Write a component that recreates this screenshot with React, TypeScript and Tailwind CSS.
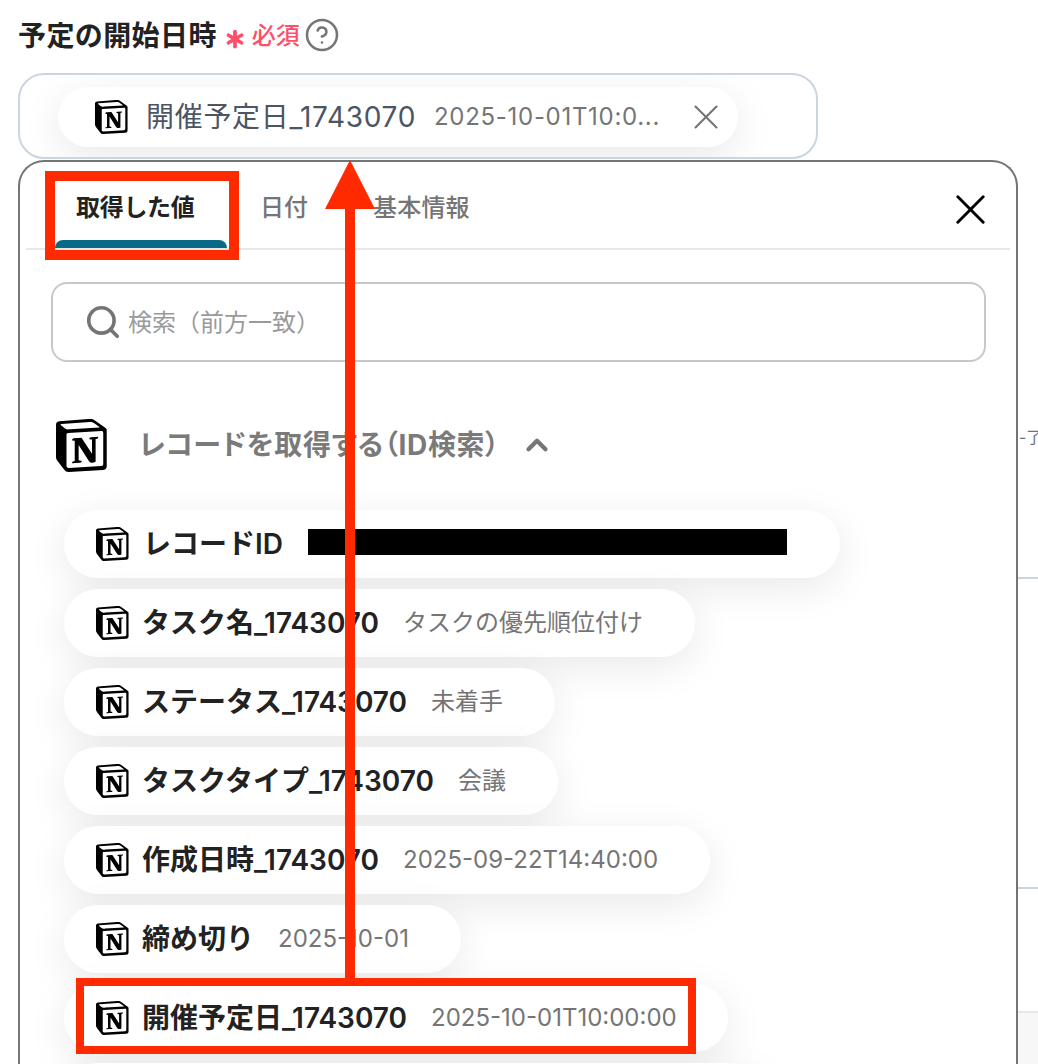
import React from "react";
import { ChevronUp, CircleHelp, Search, Asterisk } from "lucide-react";

const FONT = 'Inter, "Noto Sans CJK JP", "Noto Sans", sans-serif';

function NotionLogo({ className }: { className: string }) {
  return (
    <svg className={className} viewBox="0 0 100 100" fill="none" xmlns="http://www.w3.org/2000/svg">
      <path
        d="M6.017 4.313l55.333 -4.087c6.797 -0.583 8.543 -0.19 12.817 2.917l17.663 12.443c2.913 2.14 3.883 2.723 3.883 5.053v68.243c0 4.277 -1.553 6.807 -6.99 7.193L24.467 99.967c-4.08 0.193 -6.023 -0.39 -8.16 -3.113L3.3 79.94c-2.333 -3.113 -3.3 -5.443 -3.3 -8.167V11.113c0 -3.497 1.553 -6.413 6.017 -6.8z"
        fill="#fff"
      />
      <path
        fillRule="evenodd"
        clipRule="evenodd"
        fill="#000"
        d="M61.35 0.227l-55.333 4.087C1.553 4.7 0 7.617 0 11.113v60.66c0 2.723 0.967 5.053 3.3 8.167l13.007 16.913c2.137 2.723 4.08 3.307 8.16 3.113l64.257 -3.89c5.433 -0.387 6.99 -2.917 6.99 -7.193V20.64c0 -2.21 -0.873 -2.847 -3.443 -4.733L74.167 3.143c-4.273 -3.107 -6.02 -3.5 -12.817 -2.917zM25.92 19.523c-5.247 0.353 -6.437 0.433 -9.417 -1.99L8.927 11.507c-0.77 -0.78 -0.383 -1.753 1.557 -1.947l53.193 -3.887c4.467 -0.39 6.793 1.167 8.54 2.527l9.123 6.61c0.39 0.197 1.36 1.36 0.193 1.36l-54.933 3.307 -0.68 0.047zM19.803 88.3V30.367c0 -2.53 0.777 -3.697 3.103 -3.893L86 22.78c2.14 -0.193 3.107 1.167 3.107 3.693v57.547c0 2.53 -0.39 4.67 -3.883 4.863l-60.377 3.5c-3.493 0.193 -5.043 -0.97 -5.043 -4.083zm59.6 -54.827c0.387 1.75 0 3.5 -1.75 3.7l-2.91 0.577v42.773c-2.527 1.36 -4.853 2.137 -6.797 2.137 -3.107 0 -3.883 -0.973 -6.21 -3.887l-19.03 -29.94v28.967l6.02 1.363s0 3.5 -4.857 3.5l-13.39 0.777c-0.39 -0.78 0 -2.723 1.357 -3.11l3.497 -0.97v-38.3L30.48 40.667c-0.39 -1.75 0.58 -4.277 3.3 -4.473l14.367 -0.967 19.8 30.327v-26.83l-5.047 -0.58c-0.39 -2.143 1.163 -3.7 3.103 -3.89l13.4 -0.78z"
      />
    </svg>
  );
}

function CrossIcon({ className, width }: { className: string; width: number }) {
  return (
    <svg className={className} viewBox="0 0 32 32" fill="none" stroke="currentColor" strokeWidth={width} strokeLinecap="round">
      <line x1="2" y1="2" x2="30" y2="30" />
      <line x1="30" y1="2" x2="2" y2="30" />
    </svg>
  );
}

type Row = { name: string; value?: string; width: string; gap: string; redacted?: boolean; pad?: string };

const rows: Row[] = [
  { name: "レコードID", width: "w-[776px]", gap: "ml-[25px]", redacted: true, pad: "ml-[13px]" },
  { name: "タスク名_1743070", value: "タスクの優先順位付け", width: "w-[631px]", gap: "ml-[24px]" },
  { name: "ステータス_1743070", value: "未着手", width: "w-[491px]", gap: "ml-[24px]" },
  { name: "タスクタイプ_1743070", value: "会議", width: "w-[494px]", gap: "ml-[24px]" },
  { name: "作成日時_1743070", value: "2025-09-22T14:40:00", width: "w-[646px]", gap: "ml-[24px]" },
  { name: "締め切り", value: "2025-10-01", width: "w-[397px]", gap: "ml-[24px]" },
  { name: "開催予定日_1743070", value: "2025-10-01T10:00:00", width: "w-[664px]", gap: "ml-[24px]" },
];

function ValuePill({ row }: { row: Row }) {
  return (
    <div
      className={`${row.width} h-[68px] shrink-0 flex items-center pl-[32px] rounded-[34px] bg-white shadow-[0_10px_40px_rgba(0,0,0,0.09)] whitespace-nowrap`}
    >
      <NotionLogo className="w-[34px] h-[34px] shrink-0" />
      <span className={`${row.pad ?? "ml-[12px]"} text-[28px] leading-[34px] font-semibold text-[#222222]`}>{row.name}</span>
      {row.redacted ? (
        <span className="ml-[25px] mb-[4px] w-[479px] h-[26px] bg-black" />
      ) : (
        <span className={`${row.gap} text-[24px] leading-[30px] text-[#757575]`}>{row.value}</span>
      )}
    </div>
  );
}

export default function App() {
  return (
    <div className="relative w-[1038px] h-[1064px] overflow-hidden bg-white flex" style={{ fontFamily: FONT }}>
      <div className="w-[1018px] shrink-0 pl-[18px] flex flex-col">
        <div className="h-[73px] shrink-0 flex items-center whitespace-nowrap pb-[1px]">
          <span className="text-[28px] leading-[34px] font-semibold tracking-[0.4px] text-[#222222]">予定の開始日時</span>
          <Asterisk className="ml-[3px] mt-[5px] w-[30px] h-[30px] text-[#ff4d6a]" strokeWidth={3} />
          <span className="ml-[2px] text-[24px] leading-[30px] font-medium text-[#ff4d6a]">必須</span>
          <CircleHelp className="ml-[4px] mb-[2px] w-[36px] h-[36px] text-[#757575]" strokeWidth={1.7} />
        </div>

        <div className="w-[800px] h-[86px] shrink-0 flex items-center pl-[38px] pt-[2px] rounded-[26px] border-2 border-[#cbd5e1] overflow-hidden bg-white whitespace-nowrap">
          <div className="w-[680px] h-[60px] shrink-0 flex items-center pl-[37px] rounded-[30px] bg-white shadow-[0_10px_40px_rgba(0,0,0,0.09)]">
            <NotionLogo className="w-[34px] h-[34px] shrink-0" />
            <span className="ml-[17px] text-[28px] leading-[34px] tracking-[0.7px] text-[#4b5563]">開催予定日_1743070</span>
            <span className="ml-[18px] text-[24px] leading-[30px] tracking-[0.7px] text-[#757575]">2025-10-01T10:0...</span>
            <CrossIcon className="ml-[34px] w-[24px] h-[24px] text-[#757575]" width={2.8} />
          </div>
        </div>

        <div className="mt-[1px] w-[1000px] h-[904px] shrink-0 rounded-t-[26px] border-2 border-b-0 border-[#757575] bg-white flex flex-col">
          <div className="ml-[6px] w-[984px] h-[88px] shrink-0 flex items-end border-b-2 border-[#e5e7eb]">
            <div className="ml-[29px] w-[172px] h-full flex flex-col justify-end">
              <span className="pl-[21px] pb-[17px] text-[24px] leading-[30px] font-bold tracking-[-0.3px] text-[#222222]">取得した値</span>
              <div className="h-[8px] rounded-t-[8px] bg-[#0a6a85]" />
            </div>
            <span className="ml-[33px] pb-[25px] text-[24px] leading-[30px] font-medium text-[#757575]">日付</span>
            <span className="ml-[65px] pb-[25px] text-[24px] leading-[30px] font-medium tracking-[0.2px] text-[#757575]">基本情報</span>
            <CrossIcon className="ml-auto mr-[25px] mb-[24px] w-[29px] h-[29px] text-black" width={3.2} />
          </div>

          <div className="ml-[31px] mt-[32px] w-[935px] h-[80px] shrink-0 rounded-[16px] border-2 border-[#c8c8c8] flex items-center pl-[31px]">
            <Search className="w-[38px] h-[38px] text-[#757575]" strokeWidth={2.3} />
            <span className="ml-[6px] pt-[2px] text-[24px] leading-[30px] text-[#9a9a9a]">検索（前方一致）</span>
          </div>

          <div className="ml-[36px] mt-[56px] h-[54px] shrink-0 flex items-center whitespace-nowrap">
            <NotionLogo className="w-[53px] h-[53px] shrink-0" />
            <span className="ml-[30px] text-[28px] leading-[34px] font-bold tracking-[0.65px] text-[#7a7a7a]" style={{ fontFeatureSettings: '"palt"' }}>
              レコードを取得する（ID検索）
            </span>
            <ChevronUp className="ml-[20px] w-[34px] h-[34px] text-[#757575]" strokeWidth={3} />
          </div>

          <div className="ml-[44px] mt-[38px] flex flex-col gap-[11px]">
            {rows.map((r) => (
              <ValuePill key={r.name} row={r} />
            ))}
            <div className="w-[700px] h-[68px] shrink-0 rounded-[34px] bg-white shadow-[0_10px_40px_rgba(0,0,0,0.09)]" />
          </div>
        </div>
      </div>

      <div className="flex-1 flex flex-col min-w-0 overflow-hidden">
        <div className="h-[424px] shrink-0" />
        <span className="pl-[1px] text-[16px] leading-[26px] text-[#6b7280] whitespace-nowrap">-了</span>
        <div className="mt-[127px] h-[2px] bg-[#cbd5e1] shrink-0" />
        <div className="mt-[308px] h-[2px] bg-[#cbd5e1] shrink-0" />
        <div className="mt-[122px] flex-1 border-t-2 border-[#e5e7eb] bg-[#f7f7f7]" />
      </div>

      {/* Annotations drawn over the screenshot */}
      <div className="absolute left-[45px] top-[171px] w-[194px] h-[89px] border-[10px] border-[#ff2a00]" />
      <div className="absolute left-[76px] top-[978px] w-[620px] h-[76px] border-[8px] border-[#ff2a00]" />
      <svg className="absolute left-[325px] top-[160px] w-[50px] h-[820px]" viewBox="0 0 50 820">
        <polygon points="25,0 50,49 0,49" fill="#ff2a00" />
        <rect x="20" y="48" width="10" height="772" fill="#ff2a00" />
      </svg>
    </div>
  );
}
